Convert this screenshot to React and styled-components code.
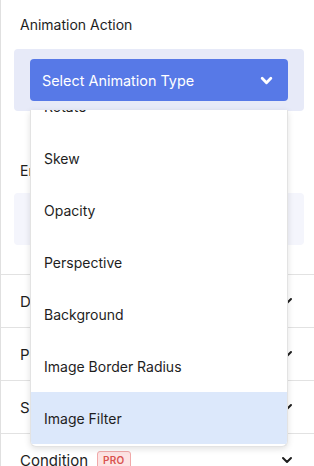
import React, { useLayoutEffect, useRef } from 'react';
import styled, { createGlobalStyle } from 'styled-components';

const GlobalStyle = createGlobalStyle`
	html, body {
		margin: 0;
		padding: 0;
		background: #fff;
	}
	body {
		font-family: Inter, "Noto Sans", "Liberation Sans", sans-serif;
		color: #1e1e1e;
		-webkit-font-smoothing: antialiased;
	}
`;

const Panel = styled.div`
	position: relative;
	width: 314px;
	height: 466px;
	box-sizing: border-box;
	border-left: 1px solid #e0e0e0;
	overflow: hidden;
`;

const Field = styled.div`
	padding: ${({ top }) => top}px 10px 0 13px;
`;

const Label = styled.div`
	font-size: 14px;
	line-height: 20px;
	padding-left: 6px;
	margin-bottom: ${({ gap }) => gap}px;
	color: #1e1e1e;
`;

const Well = styled.div`
	position: relative;
	background: ${({ light }) => (light ? '#f4f5fc' : '#e7eaf8')};
	border-radius: 4px;
	padding: 10px 16px;
	min-height: ${({ light }) => (light ? 32 : 42)}px;
	display: flex;
	align-items: center;
	justify-content: space-between;
`;

const SelectButton = styled.div`
	position: relative;
	flex: 1;
	height: 42px;
	box-sizing: border-box;
	background: #5779e7;
	border-radius: 4px;
	color: #fff;
	font-size: 14.4px;
	display: flex;
	align-items: center;
	justify-content: space-between;
	padding: 0 15px 0 12px;
`;

const Menu = styled.div`
	position: absolute;
	left: 0;
	right: 0;
	top: calc(100% + 9px);
	height: 337px;
	box-sizing: border-box;
	background: #fff;
	border: 1px solid #e3e3e3;
	border-top: none;
	border-radius: 0 0 6px 6px;
	box-shadow: 0 2px 6px rgba(0, 0, 0, 0.12);
	overflow: hidden;
	padding-bottom: 2px;
	z-index: 5;
`;

const MenuItem = styled.div`
	height: 52px;
	display: flex;
	align-items: center;
	padding-left: 13px;
	font-size: 14px;
	color: #1e1e1e;
	background: ${({ active }) => (active ? '#dce8fb' : 'transparent')};
`;

const LinkText = styled.span`
	font-size: 14px;
	color: #5779e7;
`;

const MutedText = styled.span`
	font-size: 14px;
	color: #6b6b6b;
`;

const Sections = styled.div`
	margin-top: 29px;
`;

const SectionRow = styled.div`
	height: 52px;
	border-top: 1px solid #e2e2e2;
	display: flex;
	align-items: center;
	justify-content: space-between;
	padding: 0 21px 0 19px;
	font-size: 15px;
	color: #1e1e1e;
`;

const RowTitle = styled.div`
	display: flex;
	align-items: center;
	gap: 9px;
`;

const ProBadge = styled.span`
	font-size: 10px;
	font-weight: 600;
	letter-spacing: 0.3px;
	color: #d9534f;
	background: #fde3e3;
	border: 1px solid #f1a9a9;
	border-radius: 3px;
	padding: 2px 5px;
	line-height: 13px;
`;

const Chevron = ({ color = '#1e1e1e', size = 12, width = 2 }) => (
	<svg width={size} height={size} viewBox="0 0 12 12" fill="none">
		<path d="M2 4l4 4 4-4" stroke={color} strokeWidth={width} strokeLinecap="round" strokeLinejoin="round" />
	</svg>
);

const options = ['Translate', 'Scale', 'Rotate', 'Skew', 'Opacity', 'Perspective', 'Background', 'Image Border Radius', 'Image Filter'];

const sections = ['Duration', 'Position', 'Speed'];

export default function App() {
	const menuRef = useRef(null);

	useLayoutEffect(() => {
		if (menuRef.current) menuRef.current.scrollTop = 135;
	}, []);

	return (
		<Panel>
			<GlobalStyle />
			<Field top={15}>
				<Label gap={14}>Animation Action</Label>
				<Well>
					<SelectButton>
						Select Animation Type
						<Chevron color="#fff" size={13} width={2.6} />
						<Menu ref={menuRef}>
							{options.map((o) => (
								<MenuItem key={o} active={o === 'Image Filter'}>{o}</MenuItem>
							))}
						</Menu>
					</SelectButton>
				</Well>
			</Field>
			<Field top={50}>
				<Label gap={12}>Entrance Animation</Label>
				<Well light>
					<LinkText>Choose</LinkText>
					<MutedText>None</MutedText>
				</Well>
			</Field>
			<Sections>
				{sections.map((s) => (
					<SectionRow key={s}>
						<RowTitle>{s}</RowTitle>
						<Chevron />
					</SectionRow>
				))}
				<SectionRow>
					<RowTitle>
						Condition
						<ProBadge>PRO</ProBadge>
					</RowTitle>
					<Chevron />
				</SectionRow>
			</Sections>
		</Panel>
	);
}
